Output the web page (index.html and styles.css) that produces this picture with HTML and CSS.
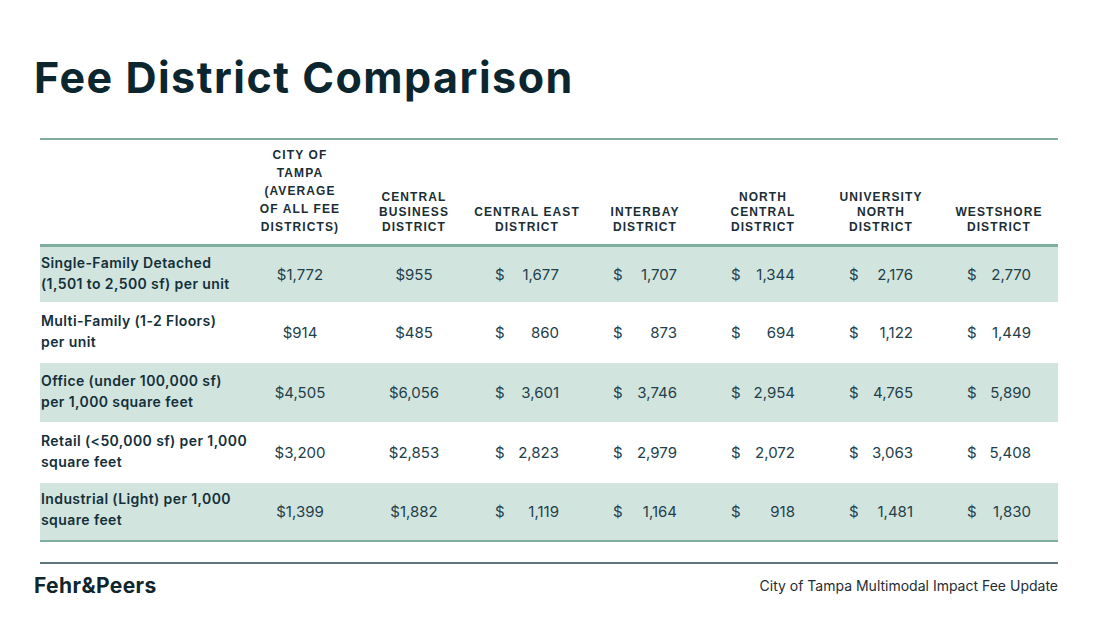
FILE: index.html
```html
<!DOCTYPE html>
<html>
<head>
<meta charset="utf-8">
<link rel="stylesheet" href="styles.css">
</head>
<body>
<div class="page">
  <h1 class="title">Fee District Comparison</h1>
  <table class="fees">
    <colgroup>
      <col class="c-label"><col class="c-city"><col class="c-cbd"><col class="c-d"><col class="c-d"><col class="c-d"><col class="c-d"><col class="c-d">
    </colgroup>
    <thead>
      <tr>
        <th></th>
        <th class="tall">CITY OF<br>TAMPA<br>(AVERAGE<br>OF ALL FEE<br>DISTRICTS)</th>
        <th>CENTRAL<br>BUSINESS<br>DISTRICT</th>
        <th>CENTRAL EAST<br>DISTRICT</th>
        <th>INTERBAY<br>DISTRICT</th>
        <th>NORTH<br>CENTRAL<br>DISTRICT</th>
        <th>UNIVERSITY<br>NORTH<br>DISTRICT</th>
        <th>WESTSHORE<br>DISTRICT</th>
      </tr>
    </thead>
    <tbody>
      <tr class="shade first">
        <td class="label">Single-Family Detached<br>(1,501 to 2,500 sf) per unit</td>
        <td>$1,772</td><td>$955</td>
        <td><span class="acc"><span>$</span><span>1,677</span></span></td>
        <td><span class="acc"><span>$</span><span>1,707</span></span></td>
        <td><span class="acc"><span>$</span><span>1,344</span></span></td>
        <td><span class="acc"><span>$</span><span>2,176</span></span></td>
        <td><span class="acc"><span>$</span><span>2,770</span></span></td>
      </tr>
      <tr>
        <td class="label">Multi-Family (1-2 Floors)<br>per unit</td>
        <td>$914</td><td>$485</td>
        <td><span class="acc"><span>$</span><span>860</span></span></td>
        <td><span class="acc"><span>$</span><span>873</span></span></td>
        <td><span class="acc"><span>$</span><span>694</span></span></td>
        <td><span class="acc"><span>$</span><span>1,122</span></span></td>
        <td><span class="acc"><span>$</span><span>1,449</span></span></td>
      </tr>
      <tr class="shade">
        <td class="label">Office (under 100,000 sf)<br>per 1,000 square feet</td>
        <td>$4,505</td><td>$6,056</td>
        <td><span class="acc"><span>$</span><span>3,601</span></span></td>
        <td><span class="acc"><span>$</span><span>3,746</span></span></td>
        <td><span class="acc"><span>$</span><span>2,954</span></span></td>
        <td><span class="acc"><span>$</span><span>4,765</span></span></td>
        <td><span class="acc"><span>$</span><span>5,890</span></span></td>
      </tr>
      <tr>
        <td class="label">Retail (&lt;50,000 sf) per 1,000<br>square feet</td>
        <td>$3,200</td><td>$2,853</td>
        <td><span class="acc"><span>$</span><span>2,823</span></span></td>
        <td><span class="acc"><span>$</span><span>2,979</span></span></td>
        <td><span class="acc"><span>$</span><span>2,072</span></span></td>
        <td><span class="acc"><span>$</span><span>3,063</span></span></td>
        <td><span class="acc"><span>$</span><span>5,408</span></span></td>
      </tr>
      <tr class="shade last">
        <td class="label">Industrial (Light) per 1,000<br>square feet</td>
        <td>$1,399</td><td>$1,882</td>
        <td><span class="acc"><span>$</span><span>1,119</span></span></td>
        <td><span class="acc"><span>$</span><span>1,164</span></span></td>
        <td><span class="acc"><span>$</span><span>918</span></span></td>
        <td><span class="acc"><span>$</span><span>1,481</span></span></td>
        <td><span class="acc"><span>$</span><span>1,830</span></span></td>
      </tr>
    </tbody>
  </table>
  <footer class="footer">
    <div class="logo">Fehr&amp;Peers</div>
    <div class="doc">City of Tampa Multimodal Impact Fee Update</div>
  </footer>
</div>
</body>
</html>
```

FILE: styles.css
```css
html, body {
  margin: 0;
  padding: 0;
  background: #ffffff;
}
body {
  font-family: Inter, "Noto Sans", sans-serif;
  color: #1d3640;
}
.page {
  width: 1100px;
  height: 642px;
  padding: 53px 42px 0 40px;
  box-sizing: border-box;
}
.title {
  margin: 0 0 0 -6px;
  font-size: 43px;
  line-height: 48px;
  font-weight: 700;
  color: #0c2630;
  letter-spacing: 1.5px;
}
.fees {
  margin-top: 37px;
  width: 1018px;
  border-collapse: collapse;
  table-layout: fixed;
  border-top: 2px solid #7fae9c;
}
.c-label { width: 200px; }
.c-city { width: 120px; }
.c-cbd { width: 108px; }
.c-d { width: 118px; }
.fees th {
  font-family: "Liberation Sans", Arial, sans-serif;
  font-weight: 700;
  font-size: 12px;
  letter-spacing: 1.1px;
  line-height: 15px;
  color: #1a2e36;
  text-align: center;
  vertical-align: bottom;
  padding: 0 0 9px;
  height: 95px;
  border-bottom: 3px solid #7fae9c;
}
.fees th.tall { line-height: 18px; padding-bottom: 8px; }
.fees td {
  box-sizing: border-box;
  font-size: 15px;
  color: #22404a;
  text-align: center;
  vertical-align: middle;
  height: 60px;
  padding: 0;
  border-bottom: 1px solid #ffffff;
}
.fees tr.shade td { background: #d2e4de; }
.fees tr.first td { height: 57px; }
.fees tr.last td { height: 58px; border-bottom: 2px solid #7fae9c; }
.fees td.label {
  text-align: left;
  white-space: nowrap;
  font-weight: 600;
  font-size: 14px;
  letter-spacing: 0.4px;
  line-height: 21px;
  color: #13303a;
  padding-left: 1px;
  padding-bottom: 4px;
}
.acc {
  display: inline-flex;
  justify-content: space-between;
  width: 64px;
}
.footer {
  margin-top: 20px;
  width: 1018px;
  border-top: 2px solid #5f777b;
  display: flex;
  justify-content: space-between;
  align-items: center;
  padding-top: 9px;
}
.logo {
  margin-left: -6px;
  font-family: Inter, sans-serif;
  font-weight: 700;
  font-size: 21px;
  letter-spacing: 0.4px;
  color: #10262e;
}
.doc {
  font-size: 14px;
  color: #1f2d33;
}
```
